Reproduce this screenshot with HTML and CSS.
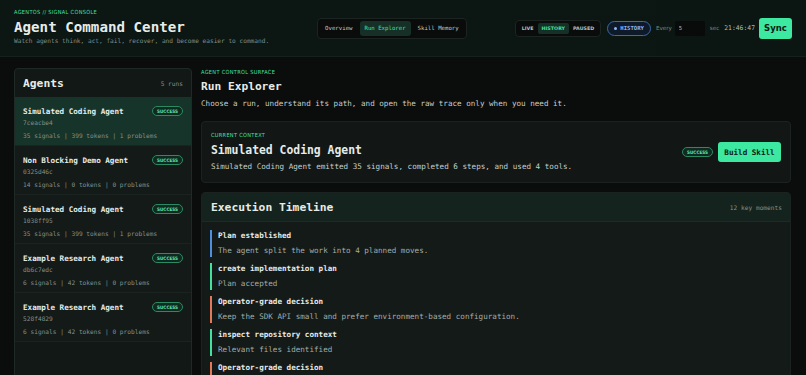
FILE: index.html
```html
<!DOCTYPE html>
<html lang="en">
<head>
    <meta charset="UTF-8">
    <meta name="viewport" content="width=device-width, initial-scale=1.0">
    <title>Agent Command Center</title>
    <link rel="stylesheet" href="styles.css">
</head>
<body>
    <header class="app-header">
        <div class="brand">
            <div class="eyebrow">AGENTOS // SIGNAL CONSOLE</div>
            <h1>Agent Command Center</h1>
            <p>Watch agents think, act, fail, recover, and become easier to command.</p>
        </div>

        <nav class="view-tabs">
            <button class="view-tab">Overview</button>
            <button class="view-tab active">Run Explorer</button>
            <button class="view-tab">Skill Memory</button>
        </nav>

        <div class="controls">
            <div class="mode-switch">
                <span class="mode">LIVE</span>
                <span class="mode active">HISTORY</span>
                <span class="mode">PAUSED</span>
            </div>
            <span class="mode-pill"><span class="dot"></span>HISTORY</span>
            <span class="ctl-label">Every</span>
            <input class="interval" type="text" value="5">
            <span class="ctl-label">sec</span>
            <span class="clock">21:46:47</span>
            <button class="btn-sync">Sync</button>
        </div>
    </header>

    <div class="container">
        <aside class="panel agents">
            <div class="agents-header">
                <h2>Agents</h2>
                <span class="count">5 runs</span>
            </div>
            <div class="agent-item active">
                <div class="agent-row">
                    <span class="agent-name">Simulated Coding Agent</span>
                    <span class="badge">SUCCESS</span>
                </div>
                <div class="agent-id">7ceacbe4</div>
                <div class="agent-stats">35 signals | 399 tokens | 1 problems</div>
            </div>
            <div class="agent-item">
                <div class="agent-row">
                    <span class="agent-name">Non Blocking Demo Agent</span>
                    <span class="badge">SUCCESS</span>
                </div>
                <div class="agent-id">0325d46c</div>
                <div class="agent-stats">14 signals | 0 tokens | 0 problems</div>
            </div>
            <div class="agent-item">
                <div class="agent-row">
                    <span class="agent-name">Simulated Coding Agent</span>
                    <span class="badge">SUCCESS</span>
                </div>
                <div class="agent-id">1038ff95</div>
                <div class="agent-stats">35 signals | 399 tokens | 1 problems</div>
            </div>
            <div class="agent-item">
                <div class="agent-row">
                    <span class="agent-name">Example Research Agent</span>
                    <span class="badge">SUCCESS</span>
                </div>
                <div class="agent-id">db6c7edc</div>
                <div class="agent-stats">6 signals | 42 tokens | 0 problems</div>
            </div>
            <div class="agent-item">
                <div class="agent-row">
                    <span class="agent-name">Example Research Agent</span>
                    <span class="badge">SUCCESS</span>
                </div>
                <div class="agent-id">528f4829</div>
                <div class="agent-stats">6 signals | 42 tokens | 0 problems</div>
            </div>
        </aside>

        <main class="explorer">
            <div class="eyebrow">AGENT CONTROL SURFACE</div>
            <h2 class="page-title">Run Explorer</h2>
            <p class="page-desc">Choose a run, understand its path, and open the raw trace only when you need it.</p>

            <section class="card context">
                <div class="context-info">
                    <div class="eyebrow">CURRENT CONTEXT</div>
                    <h3>Simulated Coding Agent</h3>
                    <p>Simulated Coding Agent emitted 35 signals, completed 6 steps, and used 4 tools.</p>
                </div>
                <div class="context-actions">
                    <span class="badge">SUCCESS</span>
                    <button class="btn-build">Build Skill</button>
                </div>
            </section>

            <section class="card timeline">
                <div class="timeline-header">
                    <h3>Execution Timeline</h3>
                    <span class="count">12 key moments</span>
                </div>
                <div class="timeline-body">
                    <div class="moment plan">
                        <div class="moment-title">Plan established</div>
                        <div class="moment-desc">The agent split the work into 4 planned moves.</div>
                    </div>
                    <div class="moment step">
                        <div class="moment-title">create implementation plan</div>
                        <div class="moment-desc">Plan accepted</div>
                    </div>
                    <div class="moment decision">
                        <div class="moment-title">Operator-grade decision</div>
                        <div class="moment-desc">Keep the SDK API small and prefer environment-based configuration.</div>
                    </div>
                    <div class="moment step">
                        <div class="moment-title">inspect repository context</div>
                        <div class="moment-desc">Relevant files identified</div>
                    </div>
                    <div class="moment decision">
                        <div class="moment-title">Operator-grade decision</div>
                        <div class="moment-desc">Keep the SDK API small and prefer environment-based configuration.</div>
                    </div>
                </div>
            </section>
        </main>
    </div>
</body>
</html>
```

FILE: styles.css
```css
:root {
    --bg: #0a0d0c;
    --panel-bg: #121816;
    --border-color: #1f2925;
    --text-color: #e6ece9;
    --text-secondary: #a3ada8;
    --text-muted: #828f89;
    --accent: #45e0a0;
    --accent-bright: #3de8a0;
    --mono: 'DejaVu Sans Mono', 'Liberation Mono', monospace;
}

* {
    box-sizing: border-box;
    margin: 0;
    padding: 0;
}

html, body {
    height: 100%;
    overflow: hidden;
}

body {
    font-family: var(--mono);
    background-color: var(--bg);
    color: var(--text-color);
}

.eyebrow {
    font-family: 'DejaVu Sans Condensed', 'DejaVu Sans', sans-serif;
    font-size: 5.6px;
    line-height: 8px;
    color: var(--accent);
    letter-spacing: 0.3px;
}

/* header */
.app-header {
    height: 57px;
    padding: 0 14px;
    display: flex;
    justify-content: space-between;
    align-items: center;
    background: linear-gradient(90deg, #0c1613 0%, #0c1714 50%, #0b1512 100%);
    border-bottom: 1px solid #16201c;
}

.brand {
    padding-bottom: 2px;
}

.brand .eyebrow {
    margin-bottom: 3px;
}

.brand h1 {
    font-size: 14.2px;
    line-height: 16px;
    font-weight: bold;
}

.brand p {
    font-size: 6.15px;
    line-height: 10px;
    color: var(--text-muted);
    margin-top: 1px;
}

.view-tabs {
    display: flex;
    align-items: center;
    gap: 2px;
    padding: 2px;
    height: 21px;
    background: #090c0b;
    border: 1px solid #1c2421;
    border-radius: 4px;
}

.view-tab {
    font-family: var(--mono);
    font-size: 5.7px;
    color: #c3cbc7;
    background: none;
    border: none;
    height: 100%;
    padding: 0 5px;
    border-radius: 3px;
}

.view-tab.active {
    color: var(--accent);
    background: #163027;
}

.controls {
    display: flex;
    align-items: center;
}

.mode-switch {
    display: flex;
    align-items: center;
    height: 17px;
    padding: 2px;
    background: #090c0b;
    border: 1px solid #1c2421;
    border-radius: 4px;
}

.mode {
    font-family: 'DejaVu Sans', sans-serif;
    font-weight: bold;
    font-size: 4.8px;
    color: #b8c0bc;
    padding: 0 4px;
    height: 100%;
    display: flex;
    align-items: center;
    border-radius: 2px;
}

.mode.active {
    color: var(--accent);
    background: #163027;
}

.mode-pill {
    display: flex;
    align-items: center;
    gap: 3px;
    height: 15px;
    margin-left: 6px;
    padding: 0 6px;
    font-size: 5.6px;
    font-weight: bold;
    color: #8fb6ee;
    background: #0e1a2a;
    border: 1px solid #3b6aa8;
    border-radius: 8px;
}

.dot {
    width: 3px;
    height: 3px;
    border-radius: 50%;
    background: #8fb6ee;
}

.ctl-label {
    font-family: 'DejaVu Sans', sans-serif;
    font-size: 5.6px;
    color: #7d8884;
    margin-left: 5px;
}

.interval {
    width: 30px;
    height: 15px;
    margin-left: 3px;
    padding: 0 4px;
    font-family: var(--mono);
    font-size: 5.6px;
    color: #b0bab5;
    background: #080b0a;
    border: none;
    border-radius: 2px;
}

.clock {
    font-size: 6.4px;
    color: #b0bab5;
    margin-left: 5px;
}

.btn-sync {
    margin-left: 4px;
    width: 33px;
    height: 21px;
    font-family: 'DejaVu Sans', sans-serif;
    font-weight: bold;
    font-size: 8.5px;
    color: #0b1a13;
    background: var(--accent-bright);
    border: none;
    border-radius: 3px;
}

/* layout */
.container {
    display: grid;
    grid-template-columns: 178px 1fr;
    gap: 9px;
    padding: 11px 15px 0 14px;
}

.panel {
    background: var(--panel-bg);
    border: 1px solid var(--border-color);
    border-radius: 4px;
}

.agents {
    min-height: 330px;
}

.agents-header {
    height: 28px;
    display: flex;
    justify-content: space-between;
    align-items: center;
    padding: 0 8px;
}

.agents-header h2 {
    font-size: 11.3px;
    font-weight: bold;
}

.count {
    font-size: 6.2px;
    color: var(--text-muted);
}

.agent-item {
    height: 49px;
    padding: 9px 8px 0;
    border-bottom: 1px solid #1a2320;
    background: #141a18;
}

.agent-item.active {
    background: #17342a;
}

.agent-row {
    display: flex;
    justify-content: space-between;
    align-items: center;
    height: 10px;
}

.agent-name {
    font-size: 7.6px;
    font-weight: bold;
}

.badge {
    display: inline-flex;
    align-items: center;
    justify-content: center;
    width: 31px;
    height: 10px;
    font-family: 'DejaVu Sans Condensed', 'DejaVu Sans', sans-serif;
    font-size: 4.6px;
    font-weight: bold;
    color: #5fe3aa;
    background: #0f2a20;
    border: 1px solid #2c8a62;
    border-radius: 5px;
}

.agent-id {
    margin-top: 2px;
    font-size: 6.2px;
    line-height: 10px;
    color: var(--text-muted);
}

.agent-stats {
    margin-top: 3px;
    font-size: 6.2px;
    line-height: 10px;
    color: var(--text-muted);
}

/* explorer */
.explorer .eyebrow {
    margin-bottom: 4px;
}

.page-title {
    font-size: 11.2px;
    line-height: 14px;
    font-weight: bold;
}

.page-desc {
    margin-top: 4px;
    font-size: 7.6px;
    line-height: 12px;
    color: #c6cecb;
}

.card {
    background: #121715;
    border: 1px solid #1b2320;
    border-radius: 4px;
}

.context {
    margin-top: 11px;
    height: 62px;
    display: flex;
    justify-content: space-between;
    align-items: center;
    padding: 0 9px;
}

.context h3 {
    margin-top: 4px;
    font-size: 11.4px;
    line-height: 14px;
    font-weight: bold;
}

.context p {
    margin-top: 4px;
    font-size: 7.6px;
    line-height: 12px;
    color: #c6cecb;
}

.context-actions {
    display: flex;
    align-items: center;
    gap: 5px;
}

.btn-build {
    width: 63px;
    height: 20px;
    font-family: var(--mono);
    font-size: 7.6px;
    font-weight: bold;
    color: #0b1a13;
    background: var(--accent-bright);
    border: none;
    border-radius: 3px;
}

.timeline {
    margin-top: 9px;
    background: #141a18;
    min-height: 200px;
    overflow: hidden;
}

.timeline-header {
    height: 29px;
    display: flex;
    justify-content: space-between;
    align-items: center;
    padding: 0 8px 0 9px;
    background: #15231e;
    border-bottom: 1px solid #1d2a25;
}

.timeline-header h3 {
    font-size: 11.3px;
    font-weight: bold;
}

.timeline-body {
    display: flex;
    flex-direction: column;
    gap: 6px;
    padding: 8px 8px 0;
}

.moment {
    border-left: 2px solid var(--accent);
    padding-left: 6px;
    height: 27px;
}

.moment.plan {
    border-left-color: #4f8fde;
}

.moment.decision {
    border-left-color: #e07a5a;
}

.moment-title {
    font-size: 7.6px;
    line-height: 11px;
    font-weight: bold;
}

.moment-desc {
    margin-top: 4px;
    font-size: 7.6px;
    line-height: 11px;
    color: var(--text-secondary);
}
```
